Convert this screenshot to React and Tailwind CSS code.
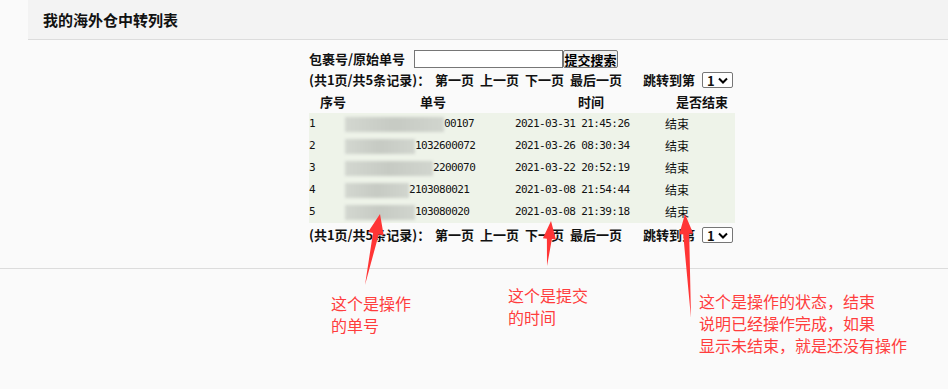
const rows = [
  { id: 1, blur: 99, tail: "00107", time: "2021-03-31 21:45:26" },
  { id: 2, blur: 70, tail: "1032600072", time: "2021-03-26 08:30:34" },
  { id: 3, blur: 88, tail: "2200070", time: "2021-03-22 20:52:19" },
  { id: 4, blur: 64, tail: "2103080021", time: "2021-03-08 21:54:44" },
  { id: 5, blur: 70, tail: "103080020", time: "2021-03-08 21:39:18" },
];

const JumpSelect = () => (
  <div className="ml-[7px] w-[31px] h-[16px] border border-[#767676] rounded-[2px] bg-white flex items-center pl-[4px] gap-[2px]">
    <span className="text-[13px] font-bold leading-none">1</span>
    <svg width="10" height="7" viewBox="0 0 10 7" className="ml-[1px]">
      <path d="M1 1.5 L5 5.5 L9 1.5" fill="none" stroke="#000" strokeWidth="2" />
    </svg>
  </div>
);

const Pager = () => (
  <div className="flex items-center h-[16px] text-[13px] font-bold leading-[16px] text-[#111]">
    <span className="w-[126px]">(共1页/共5条记录)：</span>
    <span>第一页</span>
    <span className="ml-[6px]">上一页</span>
    <span className="ml-[6px]">下一页</span>
    <span className="ml-[6px]">最后一页</span>
    <span className="ml-[21px]">跳转到第</span>
    <JumpSelect />
  </div>
);

const App = () => {
  return (
    <div className="relative w-[948px] h-[389px] overflow-hidden bg-[#fafafa] text-black font-['Noto_Sans_CJK_SC',sans-serif]">
      <div className="ml-[28px] h-[40px] bg-[#f3f3f3] border-b border-[#dcdcdc] flex items-center pl-[15px]">
        <h1 className="text-[15px] font-bold text-[#111] leading-none">我的海外仓中转列表</h1>
      </div>

      <div className="pl-[309px] pt-[10px]">
        <div className="flex items-center h-[18px]">
          <span className="w-[105px] text-[13px] font-bold leading-[18px] text-[#111]">包裹号/原始单号</span>
          <div className="w-[149px] h-[18px] bg-white border border-[#767676]" />
          <div className="w-[55px] h-[18px] bg-[#efefef] border border-[#767676] rounded-[2px] flex items-center justify-center text-[13px] font-bold leading-none">
            提交搜索
          </div>
        </div>

        <div className="mt-[4px]">
          <Pager />
        </div>

        <div className="mt-[4px] w-[426px] h-[20px] grid grid-cols-[36px_170px_150px_70px] items-center text-[13px] font-bold leading-[20px] text-[#111]">
          <span className="ml-[11px] whitespace-nowrap">序号</span>
          <span className="ml-[75px]">单号</span>
          <span className="ml-[63px]">时间</span>
          <span className="ml-[11px] whitespace-nowrap">是否结束</span>
        </div>

        <div className="mt-[1px] w-[426px] bg-[#eef3e9]">
          {rows.map((r) => (
            <div key={r.id} className="h-[22px] grid grid-cols-[36px_170px_150px_70px] items-center text-[12px] text-[#111]">
              <span className="font-['DejaVu_Sans_Mono',monospace] text-[11px] tracking-[-0.6px]">{r.id}</span>
              <div className="flex items-center">
                <div
                  className="h-[15px] bg-linear-to-r from-[#d3d7d0] via-[#c6cac3] to-[#d1d5ce] blur-[1.5px]"
                  style={{ width: r.blur }}
                />
                <span className="font-['DejaVu_Sans_Mono',monospace] text-[11px] tracking-[-0.6px]">{r.tail}</span>
              </div>
              <span className="font-['DejaVu_Sans_Mono',monospace] text-[11px] tracking-[-0.6px] whitespace-pre">{r.time}</span>
              <span className="leading-none">结束</span>
            </div>
          ))}
        </div>

        <div className="mt-[4px]">
          <Pager />
        </div>
      </div>

      <div className="mt-[25px] border-t border-[#dcdcdc]" />

      <div className="absolute left-[331px] top-[292px] text-[16px] leading-[22px] text-[#ff3d3d]">
        这个是操作<br />的单号
      </div>
      <div className="absolute left-[508px] top-[284px] text-[16px] leading-[22px] text-[#ff3d3d]">
        这个是提交<br />的时间
      </div>
      <div className="absolute left-[699px] top-[290px] text-[16px] leading-[22px] text-[#ff3d3d] whitespace-nowrap">
        这个是操作的状态，结束<br />说明已经操作完成，如果<br />显示未结束，就是还没有操作
      </div>

      <svg className="absolute left-0 top-0 pointer-events-none" width="948" height="389" viewBox="0 0 948 389">
        <polygon fill="#ff3535" points="380,214 383.7,235.3 378.8,234.2 365,285 373,233 368.1,231.9" />
        <polygon fill="#ff3535" points="551,221 555.9,239.5 551.9,239.1 547,266 546.9,238.7 542.9,238.3" />
        <polygon fill="#ff3535" points="685,214 693.2,233.6 689.2,233.8 691,318 683.2,234.2 679.2,234.4" />
      </svg>
    </div>
  );
};

export default App;
